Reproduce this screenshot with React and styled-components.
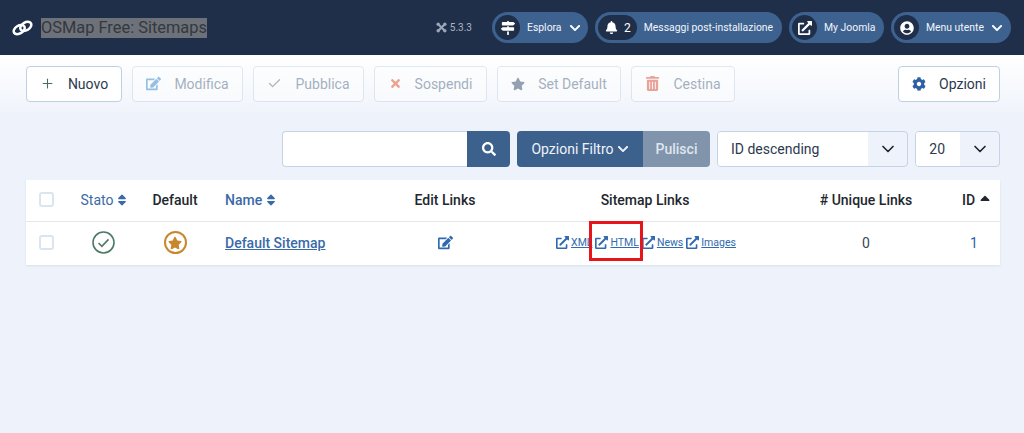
import styled, { createGlobalStyle } from 'styled-components'
import {
  FaBell,
  FaChevronDown,
  FaCog,
  FaEdit,
  FaExternalLinkAlt,
  FaMapSigns,
  FaSearch,
  FaSort,
  FaSortUp,
  FaStar,
  FaTimes,
  FaTrashAlt,
  FaUserCircle,
} from 'react-icons/fa'
import { Check as CheckMark, ChevronDown, Plus } from 'lucide-react'

const GlobalStyle = createGlobalStyle`
  html, body {
    margin: 0;
    padding: 0;
    background: #eef3fb;
    font-family: Roboto, "Liberation Sans", sans-serif;
  }
  * {
    box-sizing: border-box;
  }
`

function JoomlaMark() {
  return (
    <svg width="11" height="11" viewBox="0 0 12 12" fill="#9aa6b8" stroke="#9aa6b8">
      <path d="M3 3l6 6M9 3l-6 6" strokeWidth="2.4" />
      <circle cx="2.4" cy="2.4" r="1.9" strokeWidth="0" />
      <circle cx="9.6" cy="2.4" r="1.9" strokeWidth="0" />
      <circle cx="2.4" cy="9.6" r="1.9" strokeWidth="0" />
      <circle cx="9.6" cy="9.6" r="1.9" strokeWidth="0" />
    </svg>
  )
}

function ChainLogo() {
  return (
    <svg width="21" height="16" viewBox="0 0 21 16" fill="none" stroke="#fff" strokeWidth="2.5">
      <ellipse cx="7.2" cy="9.6" rx="6" ry="3.9" transform="rotate(-32 7.2 9.6)" />
      <ellipse cx="13.8" cy="6.4" rx="6" ry="3.9" transform="rotate(-32 13.8 6.4)" />
    </svg>
  )
}

function StatusCheck() {
  return (
    <svg width="23" height="23" viewBox="0 0 23 23" fill="none" stroke="#4f7a68">
      <circle cx="11.5" cy="11.5" r="10.5" strokeWidth="1.6" />
      <path d="M6.5 12l3.4 3.4 6.6-7" strokeWidth="1.6" />
    </svg>
  )
}

function Pill({ icon, label, count, chevron, width }) {
  return (
    <PillBox $width={width}>
      <PillIcon $wide={count !== undefined}>
        {icon}
        {count !== undefined && <PillCount>{count}</PillCount>}
      </PillIcon>
      <PillLabel>{label}</PillLabel>
      {chevron && <FaChevronDown size={12} />}
    </PillBox>
  )
}

function ToolButton({ icon, label, width, color, disabled }) {
  return (
    <ToolBtn $width={width} $disabled={disabled}>
      <ToolIcon $color={color}>{icon}</ToolIcon>
      <span>{label}</span>
    </ToolBtn>
  )
}

function SitemapLink({ label }) {
  return (
    <LinkItem>
      <FaExternalLinkAlt size={13} />
      <span>{label}</span>
    </LinkItem>
  )
}

export default function App() {
  return (
    <Page>
      <GlobalStyle />
      <Header>
        <Brand>
          <ChainLogo />
          <Title>OSMap Free: Sitemaps</Title>
        </Brand>
        <HeaderRight>
          <Version>
            <JoomlaMark />
            5.3.3
          </Version>
          <Pill icon={<FaMapSigns size={14} />} label="Esplora" chevron width={96} />
          <Pill icon={<FaBell size={13} />} count={2} label="Messaggi post-installazione" width={187} />
          <Pill icon={<FaExternalLinkAlt size={14} />} label="My Joomla" width={95} />
          <Pill icon={<FaUserCircle size={14} />} label="Menu utente" chevron width={120} />
        </HeaderRight>
      </Header>

      <Toolbar>
        <ToolButton icon={<Plus size={15} strokeWidth={1.7} />} label="Nuovo" width={96} color="#4a6a5e" />
        <ToolButton icon={<FaEdit size={15} />} label="Modifica" width={111} color="#1f78c4" disabled />
        <ToolButton icon={<CheckMark size={15} strokeWidth={2} />} label="Pubblica" width={111} color="#4d5f70" disabled />
        <ToolButton icon={<FaTimes size={13} />} label="Sospendi" width={113} color="#dc3d14" disabled />
        <ToolButton icon={<FaStar size={14} />} label="Set Default" width={124} color="#1f3558" disabled />
        <ToolButton icon={<FaTrashAlt size={15} />} label="Cestina" width={104} color="#d83a1e" disabled />
        <ToolbarEnd>
          <ToolButton icon={<FaCog size={14} />} label="Opzioni" width={102} color="#2f5fa5" />
        </ToolbarEnd>
      </Toolbar>

      <Filters>
        <SearchGroup>
          <SearchInput />
          <SearchBtn>
            <FaSearch size={14} />
          </SearchBtn>
        </SearchGroup>
        <FilterGroup>
          <FilterBtn>
            Opzioni Filtro <FaChevronDown size={12} />
          </FilterBtn>
          <ClearBtn>Pulisci</ClearBtn>
        </FilterGroup>
        <SelectBox $width={192}>
          <SelectValue>ID descending</SelectValue>
          <SelectArrow>
            <ChevronDown size={20} strokeWidth={2} />
          </SelectArrow>
        </SelectBox>
        <SelectBox $width={85}>
          <SelectValue>20</SelectValue>
          <SelectArrow>
            <ChevronDown size={20} strokeWidth={2} />
          </SelectArrow>
        </SelectBox>
      </Filters>

      <Table>
        <HeadRow>
          <Cell>
            <Check />
          </Cell>
          <SortHead>
            Stato <FaSort size={14} />
          </SortHead>
          <HeadText>Default</HeadText>
          <NameHead>
            Name <FaSort size={14} />
          </NameHead>
          <HeadText>Edit Links</HeadText>
          <HeadText>Sitemap Links</HeadText>
          <HeadText># Unique Links</HeadText>
          <IdHead>
            ID <SortUpIcon size={16} />
          </IdHead>
        </HeadRow>
        <BodyRow>
          <Cell>
            <Check />
          </Cell>
          <Cell>
            <StatusCheck />
          </Cell>
          <Cell>
            <DefaultBadge>
              <FaStar size={14} />
            </DefaultBadge>
          </Cell>
          <NameCell>Default Sitemap</NameCell>
          <Cell>
            <EditIcon size={15} />
          </Cell>
          <LinksCell>
            <SitemapLink label="XML" />
            <Highlighted>
              <SitemapLink label="HTML" />
            </Highlighted>
            <SitemapLink label="News" />
            <SitemapLink label="Images" />
          </LinksCell>
          <Cell>0</Cell>
          <IdCell>1</IdCell>
        </BodyRow>
      </Table>
    </Page>
  )
}

const Page = styled.div`
  width: 1024px;
  height: 433px;
  overflow: hidden;
  background: #eef3fb;
  font-family: Roboto, "Liberation Sans", sans-serif;
`

const Header = styled.header`
  height: 55px;
  background: #1f2f49;
  display: flex;
  align-items: center;
  justify-content: space-between;
  padding: 0 13px 0 12px;
`

const Brand = styled.div`
  display: flex;
  align-items: center;
  gap: 8px;
`

const Title = styled.h1`
  margin: 0;
  font-size: 16.4px;
  font-weight: 400;
  line-height: 20px;
  color: #35383d;
  background: #6c717a;
`

const HeaderRight = styled.div`
  display: flex;
  align-items: center;
  gap: 7px;
`

const Version = styled.div`
  display: flex;
  align-items: center;
  gap: 3px;
  font-size: 10px;
  color: #a9b4c4;
  margin-right: 13px;
`

const PillBox = styled.div`
  width: ${(p) => p.$width}px;
  height: 31px;
  border-radius: 16px;
  background: #3d6290;
  color: #fff;
  display: flex;
  align-items: center;
  gap: 7px;
  padding: 0 7px 0 3px;

  svg {
    flex-shrink: 0;
  }
`

const PillIcon = styled.span`
  height: 25px;
  min-width: 25px;
  padding: ${(p) => (p.$wide ? '0 6px 0 7px' : '0')};
  border-radius: 13px;
  background: #1f2f49;
  display: flex;
  align-items: center;
  justify-content: center;
  gap: 6px;
  flex-shrink: 0;
`

const PillCount = styled.span`
  font-size: 12px;
`

const PillLabel = styled.span`
  font-size: 10.4px;
  white-space: nowrap;
  color: #f2f5fa;
`

const Toolbar = styled.div`
  height: 57px;
  display: flex;
  align-items: center;
  gap: 10px;
  padding: 0 24px 0 26px;
  background: linear-gradient(#ffffff, #f0f4fb);
`

const ToolbarEnd = styled.div`
  margin-left: auto;
`

const ToolBtn = styled.div`
  width: ${(p) => p.$width}px;
  height: 36px;
  display: flex;
  align-items: center;
  justify-content: center;
  gap: 13px;
  background: #fff;
  border: 1px solid #bfd0e3;
  border-radius: 4px;
  font-size: 14px;
  color: ${(p) => (p.$disabled ? '#3e5675' : '#2c3a4e')};
  opacity: ${(p) => (p.$disabled ? 0.45 : 1)};
`

const ToolIcon = styled.span`
  display: flex;
  color: ${(p) => p.$color};
`

const Filters = styled.div`
  display: flex;
  align-items: center;
  padding: 19px 24px 0 282px;
`

const SearchGroup = styled.div`
  display: flex;
  height: 36px;
  margin-right: 7px;
`

const SearchInput = styled.div`
  width: 185px;
  background: #fff;
  border: 1px solid #c5d3e5;
  border-right: 0;
  border-radius: 4px 0 0 4px;
`

const SearchBtn = styled.div`
  width: 43px;
  display: flex;
  align-items: center;
  justify-content: center;
  color: #fff;
  background: #3d618d;
  border-radius: 0 4px 4px 0;
`

const FilterGroup = styled.div`
  display: flex;
  height: 36px;
  margin-right: 7px;
  font-size: 14px;
  font-weight: 500;
  color: #eef3fa;
`

const FilterBtn = styled.div`
  width: 126px;
  display: flex;
  align-items: center;
  justify-content: center;
  gap: 3px;
  background: #3d618d;
  border-radius: 4px 0 0 4px;
  font-weight: 400;
`

const ClearBtn = styled.div`
  width: 67px;
  display: flex;
  align-items: center;
  justify-content: center;
  background: #8094ac;
  border-radius: 0 4px 4px 0;
  color: #dfe5ee;
`

const SelectBox = styled.div`
  width: ${(p) => p.$width}px;
  height: 36px;
  display: flex;
  background: #eef3fb;
  border: 1px solid #c5d3e5;
  border-radius: 4px;
  overflow: hidden;
  font-size: 14px;
  color: #2c3a4e;

  & + & {
    margin-left: 7px;
  }
`

const SelectValue = styled.div`
  flex: 1;
  background: #fff;
  display: flex;
  align-items: center;
  padding-left: 13px;
`

const SelectArrow = styled.div`
  width: 39px;
  display: flex;
  align-items: center;
  justify-content: center;
  color: #1b2430;
`

const Table = styled.div`
  margin: 13px 24px 0 26px;
  background: #fff;
  box-shadow: 0 1px 2px rgba(60, 90, 130, 0.12);
`

const HeadRow = styled.div`
  height: 42px;
  padding-bottom: 2px;
  display: grid;
  grid-template-columns: 40px 74px 70px 170px 130px 270px 172px 48px;
  align-items: center;
  border-bottom: 1px solid #e3e8ef;
  font-size: 14px;
  font-weight: 500;
  color: #22272e;
`

const BodyRow = styled.div`
  height: 43px;
  padding-bottom: 2px;
  display: grid;
  grid-template-columns: 40px 74px 70px 170px 130px 270px 172px 48px;
  align-items: center;
  font-size: 14px;
  color: #3b4552;
`

const Cell = styled.div`
  display: flex;
  align-items: center;
  justify-content: center;
`

const HeadText = styled(Cell)`
  gap: 2px;
  white-space: nowrap;
`

const SortHead = styled(HeadText)`
  color: #3a6aa8;
  font-weight: 400;
  padding-left: 4px;
`

const NameHead = styled(SortHead)`
  justify-content: flex-start;
  padding-left: 15px;
  font-weight: 500;
`

const IdHead = styled(HeadText)`
  padding-left: 3px;
`

const SortUpIcon = styled(FaSortUp)`
  margin-top: 5px;
  color: #22272e;
`

const Check = styled.span`
  width: 15px;
  height: 15px;
  border: 2px solid #dbe5f0;
  border-radius: 3px;
  background: #fff;
`

const DefaultBadge = styled.span`
  width: 23px;
  height: 23px;
  border-radius: 50%;
  border: 2px solid #c8872d;
  color: #c8872d;
  display: flex;
  align-items: center;
  justify-content: center;
`

const NameCell = styled.a`
  padding-left: 15px;
  color: #3a6aa8;
  font-weight: 500;
  text-decoration: underline;
`

const EditIcon = styled(FaEdit)`
  color: #2f6ab0;
`

const LinksCell = styled(Cell)`
  gap: 3px;
  padding-left: 2px;
`

const LinkItem = styled.a`
  display: flex;
  align-items: center;
  gap: 2px;
  color: #2f6ab0;
  font-size: 10.5px;

  span {
    text-decoration: underline;
  }
`

const Highlighted = styled.span`
  position: relative;
  display: flex;

  &::after {
    content: '';
    position: absolute;
    left: -6px;
    right: -4px;
    top: -15px;
    bottom: -12px;
    border: 3px solid #e8141c;
  }
`

const IdCell = styled(Cell)`
  color: #2f5fa5;
  padding-right: 4px;
`
